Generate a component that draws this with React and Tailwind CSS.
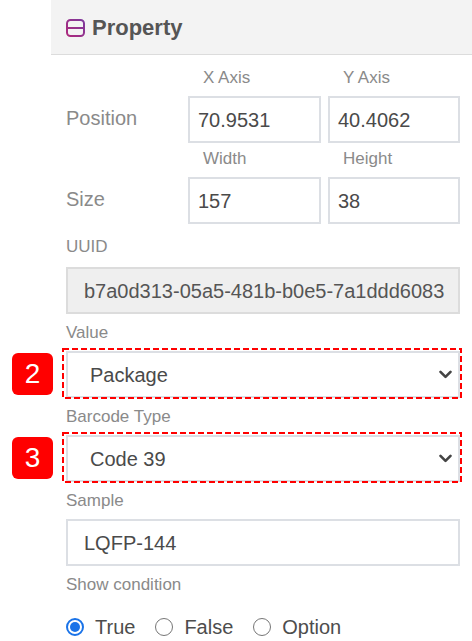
import React from "react";

function Chevron() {
  return (
    <svg width="13" height="9" viewBox="0 0 13 9" className="shrink-0">
      <path d="M1.5 1.8 L6.5 6.8 L11.5 1.8" fill="none" stroke="#444" strokeWidth="2.6" strokeLinecap="round" strokeLinejoin="round" />
    </svg>
  );
}

function Annotated({ num, children }) {
  return (
    <div className="relative">
      {children}
      <svg className="absolute pointer-events-none" style={{ left: -4, top: -3 }} width="400" height="51" viewBox="0 0 400 51">
        <rect x="1" y="1" width="398" height="49" fill="none" stroke="#ff0000" strokeWidth="2" strokeDasharray="6 3" />
      </svg>
      <div className="absolute left-[-54px] top-[2px] w-[41px] h-[42px] rounded-[6px] bg-[#ff0000] flex items-center justify-center text-white text-[28px] leading-none">
        {num}
      </div>
    </div>
  );
}

function SelectBox({ value }) {
  return (
    <div className="h-[47px] border-2 border-[#dcdfe4] bg-white flex items-center justify-between pl-[22px] pr-[6px] text-[20px] text-[#4a4a4a]">
      <span>{value}</span>
      <Chevron />
    </div>
  );
}

function Radio({ checked, label }) {
  return (
    <div className="flex items-center gap-[11px]">
      {checked ? (
        <span className="w-[18px] h-[18px] rounded-full border-2 border-[#1a73e8] flex items-center justify-center">
          <span className="w-[10px] h-[10px] rounded-full bg-[#1a73e8]" />
        </span>
      ) : (
        <span className="w-[18px] h-[18px] rounded-full border-[1.5px] border-[#767676] bg-white" />
      )}
      <span className="text-[20px] text-[#4d4d4d] leading-[24px]">{label}</span>
    </div>
  );
}

export default function App() {
  return (
    <div className="w-[472px] h-[641px] overflow-hidden bg-white pl-[51px] font-['Liberation_Sans',Arial,sans-serif]">
      <div className="h-full bg-white">
        <div className="h-[55px] bg-[#f3f3f3] border-b border-[#dcdcdc] flex items-center pl-[15px] gap-[7px] pt-[1px]">
          <svg width="19" height="18" viewBox="0 0 19 18">
            <defs>
              <linearGradient id="g" gradientUnits="userSpaceOnUse" x1="0" y1="18" x2="19" y2="0">
                <stop offset="0" stopColor="#b0287a" />
                <stop offset="1" stopColor="#7b3a9e" />
              </linearGradient>
            </defs>
            <rect x="1" y="1" width="17" height="16" rx="3.5" fill="none" stroke="url(#g)" strokeWidth="2" />
            <line x1="2" y1="9" x2="17" y2="9" stroke="url(#g)" strokeWidth="2" />
          </svg>
          <span className="text-[22px] font-bold text-[#555] leading-none">Property</span>
        </div>

        <div className="pl-[15px] pr-[12px]">
          <div className="grid grid-cols-[115px_133px_132px] gap-x-[7px] mt-[13px]">
            <div />
            <div className="h-[20px] leading-[20px] text-[17px] text-[#8a8a8a] pl-[15px]">X Axis</div>
            <div className="h-[20px] leading-[20px] text-[17px] text-[#8a8a8a] pl-[15px]">Y Axis</div>
            <div className="col-span-3 h-[8px]" />
            <div className="flex items-center pb-[4px] text-[20px] text-[#8a8a8a]">Position</div>
            <div className="h-[47px] border-2 border-[#dcdfe4] flex items-center pl-[8px] text-[20px] text-[#4a4a4a]">70.9531</div>
            <div className="h-[47px] border-2 border-[#dcdfe4] flex items-center pl-[8px] text-[20px] text-[#4a4a4a]">40.4062</div>

            <div className="col-span-3 h-[6px]" />
            <div />
            <div className="h-[20px] leading-[20px] text-[17px] text-[#8a8a8a] pl-[15px]">Width</div>
            <div className="h-[20px] leading-[20px] text-[17px] text-[#8a8a8a] pl-[15px]">Height</div>
            <div className="col-span-3 h-[8px]" />
            <div className="flex items-center pb-[4px] text-[20px] text-[#8a8a8a]">Size</div>
            <div className="h-[47px] border-2 border-[#dcdfe4] flex items-center pl-[8px] text-[20px] text-[#4a4a4a]">157</div>
            <div className="h-[47px] border-2 border-[#dcdfe4] flex items-center pl-[8px] text-[20px] text-[#4a4a4a]">38</div>
          </div>

          <div className="mt-[13px] h-[20px] leading-[20px] text-[17px] text-[#8a8a8a]">UUID</div>
          <div className="mt-[10px] h-[47px] border-2 border-[#dcdcdc] bg-[#efefef] flex items-center pl-[16px] text-[20px] text-[#555] whitespace-nowrap overflow-hidden">
            b7a0d313-05a5-481b-b0e5-7a1ddd6083
          </div>

          <div className="mt-[9px] h-[20px] leading-[20px] text-[17px] text-[#8a8a8a]">Value</div>
          <div className="mt-[8px]">
            <Annotated num="2">
              <SelectBox value="Package" />
            </Annotated>
          </div>

          <div className="mt-[9px] h-[20px] leading-[20px] text-[17px] text-[#8a8a8a]">Barcode Type</div>
          <div className="mt-[8px]">
            <Annotated num="3">
              <SelectBox value="Code 39" />
            </Annotated>
          </div>

          <div className="mt-[9px] h-[20px] leading-[20px] text-[17px] text-[#8a8a8a]">Sample</div>
          <div className="mt-[8px] h-[47px] border-2 border-[#dcdfe4] flex items-center pl-[16px] text-[20px] text-[#4a4a4a]">LQFP-144</div>

          <div className="mt-[9px] h-[20px] leading-[20px] text-[17px] text-[#8a8a8a]">Show condition</div>
          <div className="mt-[20px] flex items-center gap-[20px]">
            <Radio checked label="True" />
            <Radio label="False" />
            <Radio label="Option" />
          </div>
        </div>
      </div>
    </div>
  );
}
